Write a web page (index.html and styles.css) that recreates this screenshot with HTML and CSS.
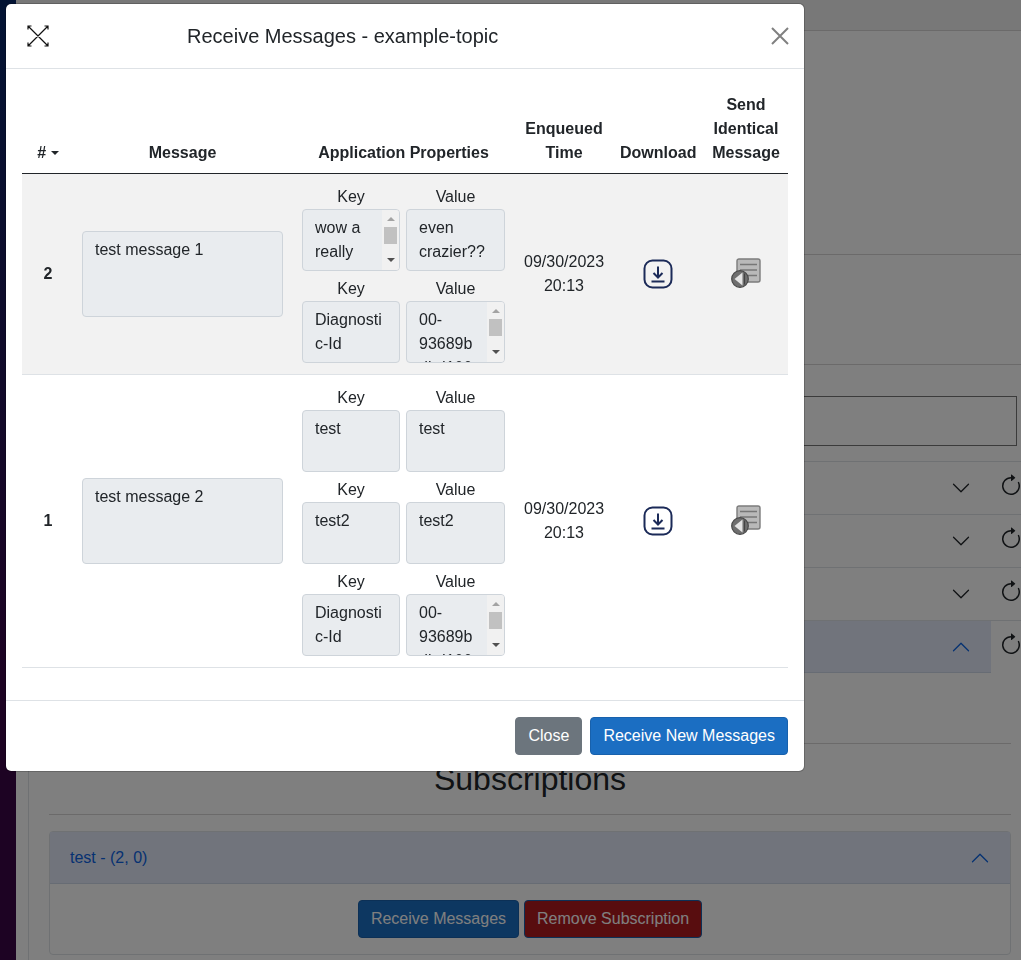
FILE: index.html
```html
<!DOCTYPE html>
<html lang="en">
<head>
    <meta charset="UTF-8">
    <meta name="viewport" content="width=device-width, initial-scale=1.0">
    <title>Receive Messages - example-topic</title>
    <link rel="stylesheet" href="styles.css">
</head>
<body>
    <svg class="sprite" aria-hidden="true">
        <symbol id="chevron-down" viewBox="0 0 16 16">
            <path fill="currentColor" fill-rule="evenodd" d="M1.646 4.646a.5.5 0 0 1 .708 0L8 10.293l5.646-5.647a.5.5 0 0 1 .708.708l-6 6a.5.5 0 0 1-.708 0l-6-6a.5.5 0 0 1 0-.708z"/>
        </symbol>
        <symbol id="refresh" viewBox="0 0 16 16">
            <path fill="currentColor" fill-rule="evenodd" d="M8 3a5 5 0 1 0 4.546 2.914.5.5 0 0 1 .908-.417A6 6 0 1 1 8 2v1z"/>
            <path fill="currentColor" d="M8 4.466V.534a.25.25 0 0 1 .41-.192l2.36 1.966c.12.1.12.284 0 .384L8.41 4.658A.25.25 0 0 1 8 4.466z"/>
        </symbol>
        <symbol id="download" viewBox="0 0 30 30">
            <rect x="1.5" y="1.5" width="27" height="27" rx="8" fill="none" stroke="#1b2a58" stroke-width="2"/>
            <path d="M15 7.5v11M10.5 14l4.5 4.5 4.5-4.5M8.5 22.5h13" fill="none" stroke="#1b2a58" stroke-width="2"/>
        </symbol>
        <symbol id="resend" viewBox="0 0 32 32">
            <rect x="7" y="1" width="23" height="23" rx="2" fill="#b9b9b9" stroke="#7c7c7c" stroke-width="1.4"/>
            <path d="M10 6.5h17M10 12h17M14 17.5h13" stroke="#777" stroke-width="1.6"/>
            <circle cx="10" cy="21" r="8.3" fill="#6f6f6f" stroke="#484848" stroke-width="1.2"/>
            <path d="M4.5 21l8-6.5v13z" fill="#e4e4e4"/>
            <path d="M14.6 15.5v11" stroke="#3f3f3f" stroke-width="1"/>
        </symbol>
    </svg>

    <div class="layout">
        <div class="sidebar"></div>
        <div class="main">
            <div class="topbar"></div>
            <div class="panel">
                <div class="block block-tall"></div>
                <div class="block block-short"></div>
                <div class="field"></div>

                <div class="topic-row">
                    <div class="topic-head"><svg class="chevron"><use href="#chevron-down"/></svg></div>
                    <svg class="refresh"><use href="#refresh"/></svg>
                </div>
                <div class="topic-row">
                    <div class="topic-head"><svg class="chevron"><use href="#chevron-down"/></svg></div>
                    <svg class="refresh"><use href="#refresh"/></svg>
                </div>
                <div class="topic-row">
                    <div class="topic-head"><svg class="chevron"><use href="#chevron-down"/></svg></div>
                    <svg class="refresh"><use href="#refresh"/></svg>
                </div>
                <div class="topic-row topic-row-open">
                    <div class="topic-head"><svg class="chevron chevron-up"><use href="#chevron-down"/></svg></div>
                    <svg class="refresh"><use href="#refresh"/></svg>
                </div>

                <div class="subscriptions">
                    <h2>Subscriptions</h2>
                    <div class="sub-card">
                        <div class="sub-head">
                            <span>test - (2, 0)</span>
                            <svg class="chevron chevron-up"><use href="#chevron-down"/></svg>
                        </div>
                        <div class="sub-body">
                            <button class="btn btn-primary">Receive Messages</button>
                            <button class="btn btn-danger">Remove Subscription</button>
                        </div>
                    </div>
                </div>
            </div>
        </div>
    </div>

    <div class="backdrop">
        <div class="modal">
            <div class="modal-header">
                <svg class="expand-icon" viewBox="0 0 22 22">
                    <path d="M1 1l20 20M21 1L1 21M1 4.5V1h3.5M17.5 1H21v3.5M1 17.5V21h3.5M17.5 21H21v-3.5" fill="none" stroke="#111" stroke-width="1.2"/>
                </svg>
                <h5 class="modal-title">Receive Messages - example-topic</h5>
                <svg class="close-icon" viewBox="0 0 18 18">
                    <path d="M1 1l16 16M17 1L1 17" fill="none" stroke="#808080" stroke-width="2"/>
                </svg>
            </div>

            <div class="modal-body">
                <table class="messages">
                    <colgroup>
                        <col class="col-num">
                        <col class="col-message">
                        <col class="col-props">
                        <col class="col-time">
                        <col class="col-download">
                        <col class="col-send">
                    </colgroup>
                    <thead>
                        <tr>
                            <th># <span class="caret"></span></th>
                            <th>Message</th>
                            <th>Application Properties</th>
                            <th>Enqueued Time</th>
                            <th>Download</th>
                            <th>Send Identical Message</th>
                        </tr>
                    </thead>
                    <tbody>
                        <tr class="striped">
                            <td class="num">2</td>
                            <td><div class="box message-box">test message 1</div></td>
                            <td class="props">
                                <div class="prop-grid">
                                    <div class="prop">
                                        <div class="prop-label">Key</div>
                                        <div class="box prop-box">
                                            <div class="prop-text">wow a really crazy key</div>
                                            <div class="scrollbar"><span class="arrow-up"></span><span class="thumb"></span><span class="arrow-down"></span></div>
                                        </div>
                                    </div>
                                    <div class="prop">
                                        <div class="prop-label">Value</div>
                                        <div class="box prop-box"><div class="prop-text">even crazier??</div></div>
                                    </div>
                                    <div class="prop">
                                        <div class="prop-label">Key</div>
                                        <div class="box prop-box"><div class="prop-text">Diagnostic-Id</div></div>
                                    </div>
                                    <div class="prop">
                                        <div class="prop-label">Value</div>
                                        <div class="box prop-box">
                                            <div class="prop-text">00-93689bdbd1000</div>
                                            <div class="scrollbar"><span class="arrow-up"></span><span class="thumb"></span><span class="arrow-down"></span></div>
                                        </div>
                                    </div>
                                </div>
                            </td>
                            <td class="time">09/30/2023 20:13</td>
                            <td class="action"><svg class="download-icon"><use href="#download"/></svg></td>
                            <td class="action"><svg class="resend-icon"><use href="#resend"/></svg></td>
                        </tr>
                        <tr>
                            <td class="num">1</td>
                            <td><div class="box message-box">test message 2</div></td>
                            <td class="props">
                                <div class="prop-grid">
                                    <div class="prop">
                                        <div class="prop-label">Key</div>
                                        <div class="box prop-box"><div class="prop-text">test</div></div>
                                    </div>
                                    <div class="prop">
                                        <div class="prop-label">Value</div>
                                        <div class="box prop-box"><div class="prop-text">test</div></div>
                                    </div>
                                    <div class="prop">
                                        <div class="prop-label">Key</div>
                                        <div class="box prop-box"><div class="prop-text">test2</div></div>
                                    </div>
                                    <div class="prop">
                                        <div class="prop-label">Value</div>
                                        <div class="box prop-box"><div class="prop-text">test2</div></div>
                                    </div>
                                    <div class="prop">
                                        <div class="prop-label">Key</div>
                                        <div class="box prop-box"><div class="prop-text">Diagnostic-Id</div></div>
                                    </div>
                                    <div class="prop">
                                        <div class="prop-label">Value</div>
                                        <div class="box prop-box">
                                            <div class="prop-text">00-93689bdbd1000</div>
                                            <div class="scrollbar"><span class="arrow-up"></span><span class="thumb"></span><span class="arrow-down"></span></div>
                                        </div>
                                    </div>
                                </div>
                            </td>
                            <td class="time">09/30/2023 20:13</td>
                            <td class="action"><svg class="download-icon"><use href="#download"/></svg></td>
                            <td class="action"><svg class="resend-icon"><use href="#resend"/></svg></td>
                        </tr>
                    </tbody>
                </table>
            </div>

            <div class="modal-footer">
                <button class="btn btn-secondary">Close</button>
                <button class="btn btn-primary">Receive New Messages</button>
            </div>
        </div>
    </div>
</body>
</html>
```

FILE: styles.css
```css
* {
    box-sizing: border-box;
}
html, body {
    height: 100%;
    margin: 0;
    overflow: hidden;
}
body {
    font-family: "Liberation Sans", Arial, sans-serif;
    font-size: 16px;
    line-height: 24px;
    color: #212529;
    background-color: #ffffff;
}
.sprite {
    display: none;
}

/* page behind the dialog */
.layout {
    display: flex;
    height: 960px;
}
.sidebar {
    flex: 0 0 16px;
    background-image: linear-gradient(180deg, #052767 0%, #3a0647 70%);
}
.main {
    flex: 1;
    min-width: 0;
    overflow: hidden;
}
.topbar {
    height: 31px;
    background-color: #f0f0f0;
    border-bottom: 1px solid #d6d5d5;
}
.panel {
    margin-left: 12px;
    height: 929px;
    border-left: 1px solid #dee2e6;
}
.block {
    border-bottom: 1px solid #d6d5d5;
}
.block-tall {
    height: 224px;
}
.block-short {
    height: 110px;
}
.field {
    height: 50px;
    margin: 31px 4px 15px 20px;
    border: 1px solid #767676;
}
.topic-row {
    display: flex;
    align-items: flex-start;
    height: 53px;
    border-top: 1px solid #dee2e6;
}
.topic-head {
    display: flex;
    flex: 0 0 962px;
    align-items: center;
    justify-content: flex-end;
    height: 52px;
    padding-right: 20px;
}
.topic-row-open .topic-head {
    background-color: #e2e9f8;
    border-bottom: 1px solid #cfd8e8;
}
.chevron {
    display: block;
    width: 20px;
    height: 20px;
    color: #212529;
}
.chevron-up {
    color: #0c63e4;
    transform: rotate(180deg);
}
.refresh {
    flex: 0 0 24px;
    width: 24px;
    height: 24px;
    margin: 12px 0 0 8px;
    color: #212529;
}
.subscriptions {
    margin: 70px 10px 0 20px;
    border-top: 1px solid #d6d5d5;
}
.subscriptions h2 {
    margin: 0;
    height: 71px;
    font-size: 32px;
    font-weight: 400;
    line-height: 70px;
    text-align: center;
    border-bottom: 1px solid #d6d5d5;
}
.sub-card {
    margin-top: 16px;
    border: 1px solid #dee2e6;
    border-radius: 4px;
}
.sub-head {
    display: flex;
    align-items: center;
    justify-content: space-between;
    height: 52px;
    padding: 0 20px;
    color: #0c63e4;
    background-color: #e2e9f8;
    border-bottom: 1px solid #cfd8e8;
}
.sub-body {
    display: flex;
    justify-content: center;
    gap: 5px;
    padding: 16px 0;
}

/* buttons */
.btn {
    height: 38px;
    padding: 0 12px;
    font-family: inherit;
    font-size: 16px;
    color: #ffffff;
    border: 1px solid transparent;
    border-radius: 4px;
}
.btn-primary {
    background-color: #1b6ec2;
    border-color: #1861ac;
}
.btn-secondary {
    background-color: #6c757d;
    border-color: #6c757d;
}
.btn-danger {
    background-color: #b11a1f;
    border-color: #1861ac;
}

/* dialog */
.backdrop {
    position: fixed;
    top: 0;
    left: 0;
    width: 100%;
    height: 100%;
    background-color: rgba(0, 0, 0, 0.5);
}
.modal {
    position: absolute;
    top: 3px;
    left: 5px;
    width: 800px;
    background-color: #ffffff;
    background-clip: padding-box;
    border: 1px solid rgba(0, 0, 0, 0.2);
    border-radius: 6px;
}
.modal-header {
    display: flex;
    align-items: center;
    height: 65px;
    padding: 0 15px 0 21px;
    border-bottom: 1px solid #dee2e6;
}
.expand-icon {
    flex: 0 0 22px;
    width: 22px;
    height: 22px;
}
.modal-title {
    margin: 0 0 0 138px;
    font-size: 20px;
    font-weight: 400;
    line-height: 30px;
}
.close-icon {
    width: 18px;
    height: 18px;
    margin-left: auto;
}
.modal-body {
    padding: 16px 16px 32px;
}
.modal-footer {
    display: flex;
    justify-content: flex-end;
    gap: 8px;
    padding: 16px;
    border-top: 1px solid #dee2e6;
}

/* messages table */
.messages {
    width: 766px;
    table-layout: fixed;
    border-collapse: collapse;
}
.col-num { width: 52px; }
.col-message { width: 217px; }
.col-props { width: 225px; }
.col-time { width: 96px; }
.col-download { width: 92px; }
.col-send { width: 84px; }

.messages th {
    padding: 8px;
    vertical-align: bottom;
    text-align: center;
    font-weight: 700;
    border-bottom: 1px solid #212529;
}
.messages td {
    padding: 0 8px;
    vertical-align: middle;
    text-align: center;
    border-bottom: 1px solid #dee2e6;
}
.striped td {
    background-color: #f2f2f2;
}
.caret {
    display: inline-block;
    vertical-align: 3px;
    border-top: 4px solid #212529;
    border-left: 4px solid transparent;
    border-right: 4px solid transparent;
}
.messages td.num {
    font-weight: 700;
}
.box {
    background-color: #e9ecef;
    border: 1px solid #ced4da;
    border-radius: 4px;
    text-align: left;
}
.message-box {
    height: 86px;
    padding: 6px 12px;
}
.messages td.props {
    padding: 10px 11px 11px;
}
.prop-grid {
    display: grid;
    grid-template-columns: 98px 99px;
    column-gap: 6px;
    row-gap: 5px;
}
.prop-label {
    height: 25px;
    line-height: 26px;
    text-align: center;
}
.prop-box {
    display: flex;
    height: 62px;
    overflow: hidden;
}
.prop-text {
    flex: 1;
    min-width: 0;
    padding: 6px 12px 0;
    overflow: hidden;
    overflow-wrap: anywhere;
}
.scrollbar {
    display: flex;
    flex: 0 0 17px;
    flex-direction: column;
    align-items: center;
    padding: 7px 0 8px;
    background-color: #f1f1f1;
}
.arrow-up {
    border-bottom: 4px solid #a3a3a3;
    border-left: 4px solid transparent;
    border-right: 4px solid transparent;
}
.arrow-down {
    margin-top: auto;
    border-top: 4px solid #505050;
    border-left: 4px solid transparent;
    border-right: 4px solid transparent;
}
.thumb {
    flex: 0 0 17px;
    width: 13px;
    margin-top: 6px;
    background-color: #c1c1c1;
}
.download-icon {
    display: inline-block;
    width: 30px;
    height: 30px;
    vertical-align: middle;
}
.resend-icon {
    display: inline-block;
    width: 32px;
    height: 32px;
    vertical-align: middle;
}
```
